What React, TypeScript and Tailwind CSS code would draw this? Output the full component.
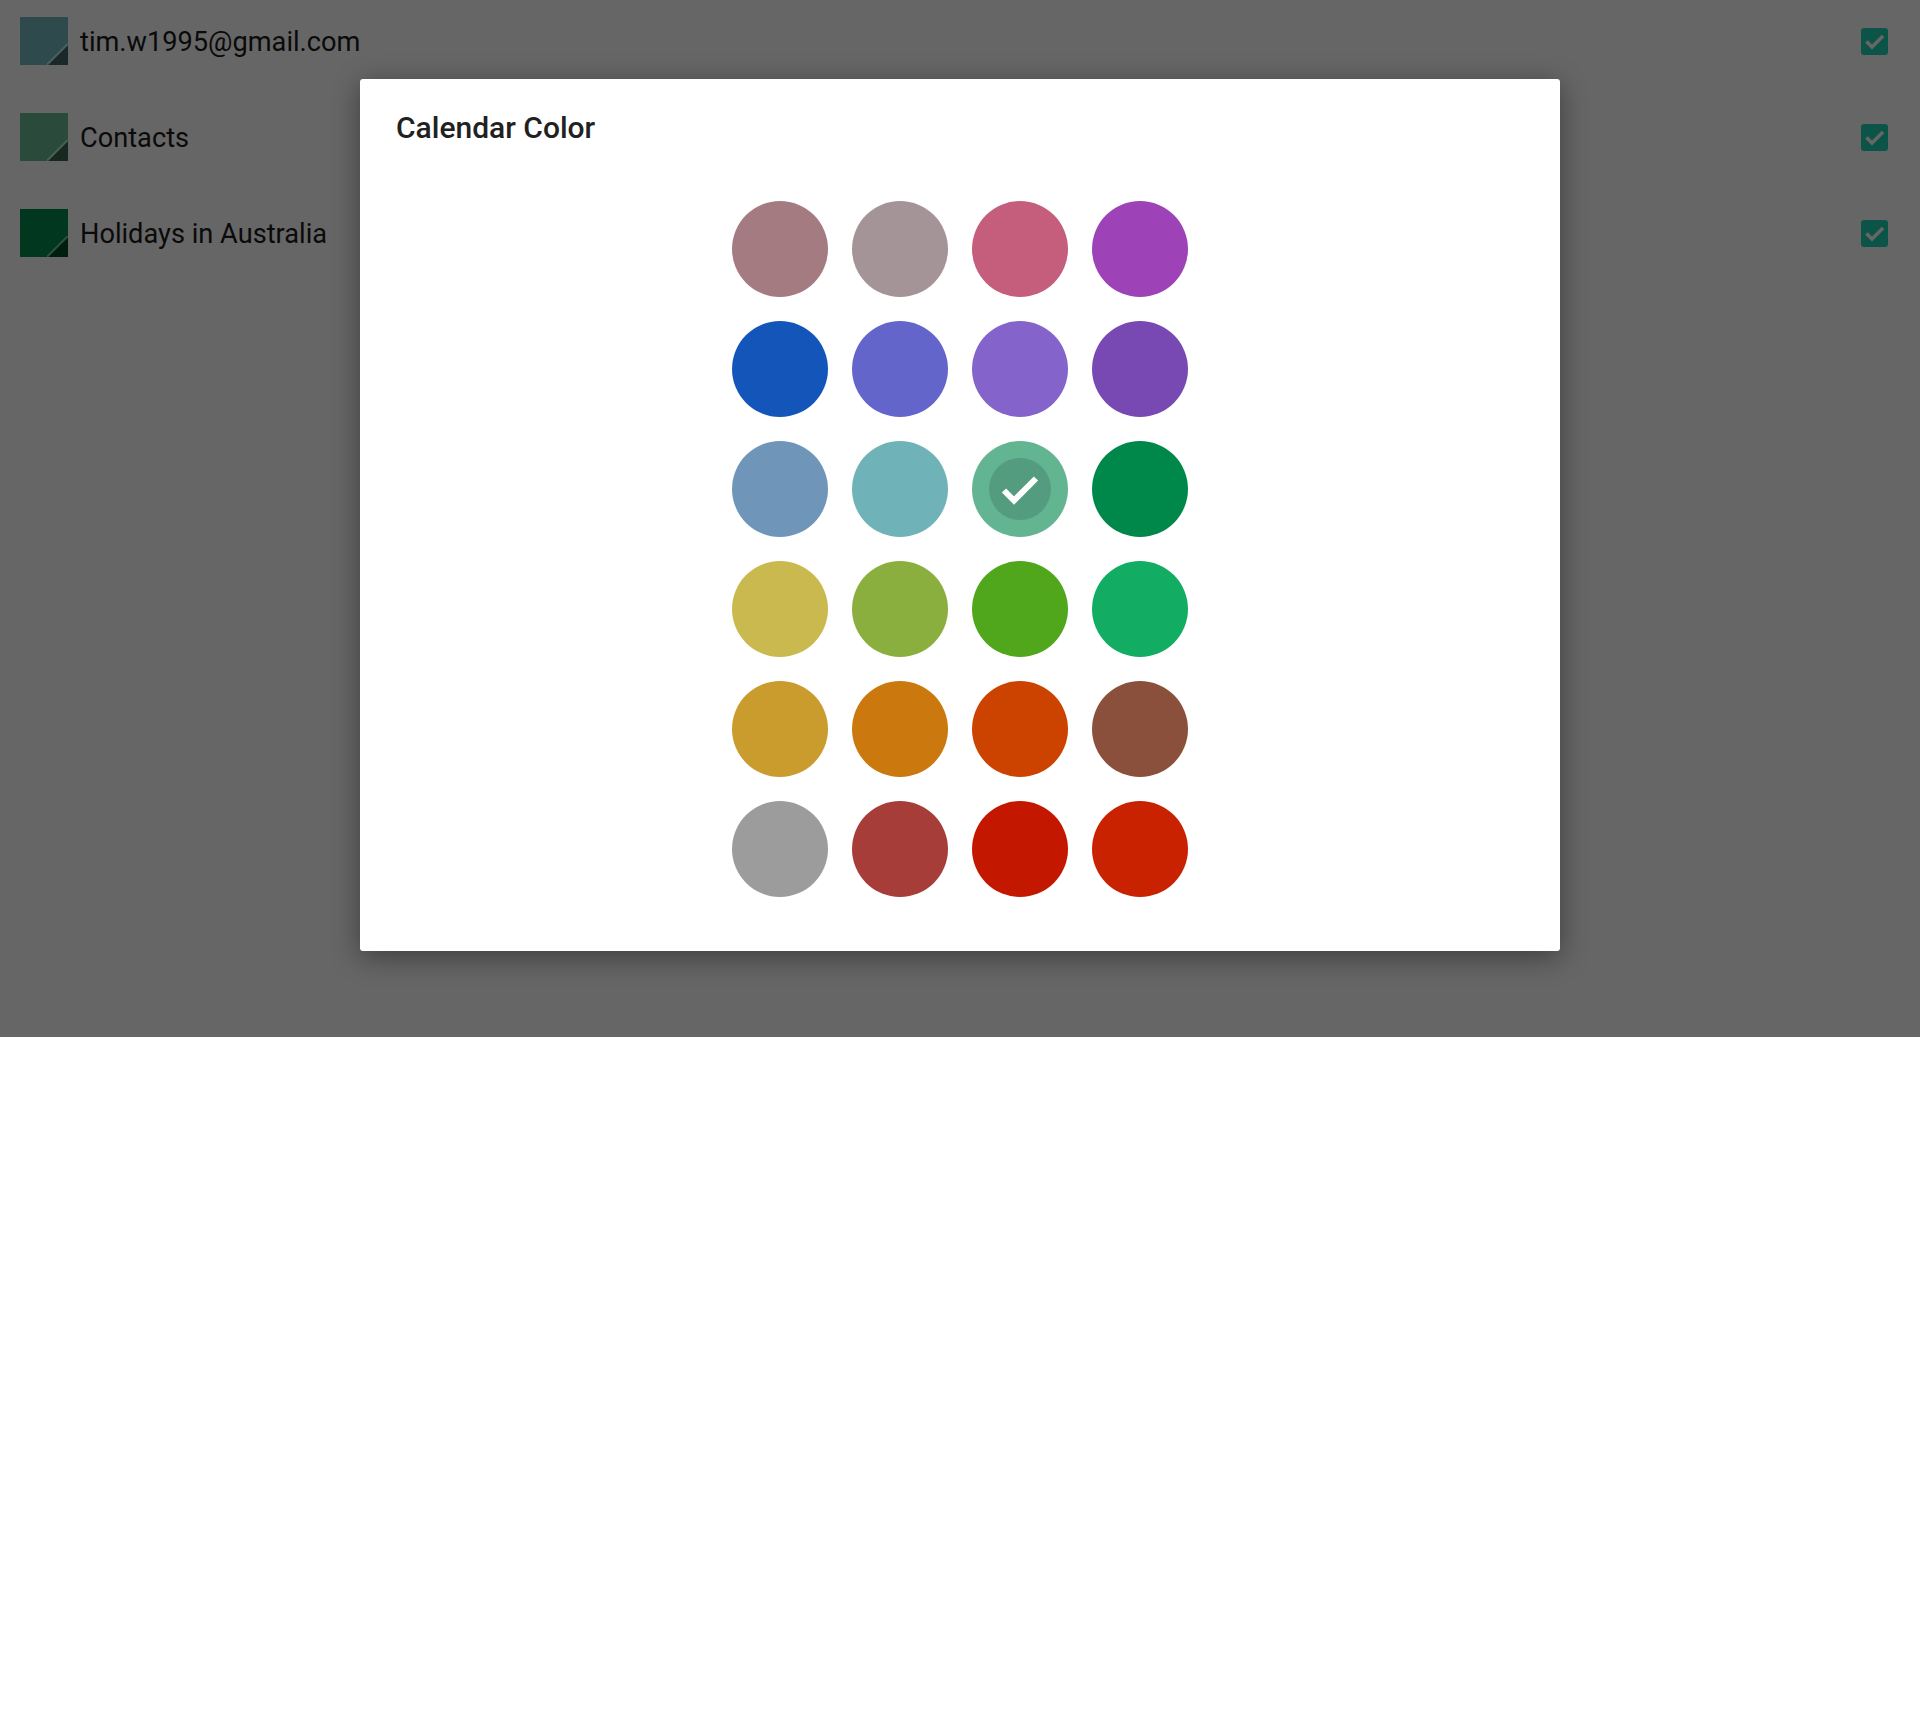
import React from "react";

const calendars = [
  { name: "tim.w1995@gmail.com", color: "bg-[#2f4a4c]" },
  { name: "Contacts", color: "bg-[#2a4a3c]" },
  { name: "Holidays in Australia", color: "bg-[#00371e]" },
];

// rows of the picker, left to right
const palette = [
  ["#a47b81", "#a59497", "#c55e7d", "#9d42b7"],
  ["#1455b9", "#6365cb", "#8464ca", "#7849b3"],
  ["#6f96b9", "#6fb3b9", "#63b592", "#00884a"],
  ["#cab94e", "#8baf3e", "#50a71b", "#12ad63"],
  ["#ca9b2d", "#cb780e", "#cc4300", "#8b503c"],
  ["#9c9c9c", "#a63d39", "#c41700", "#c82200"],
];

const SELECTED = "#63b592";

function Swatch({ color }: { color: string }) {
  return (
    <div className={`relative w-12 h-12 shrink-0 overflow-hidden ${color}`}>
      <svg className="absolute right-0 bottom-0" width="21" height="21" viewBox="0 0 21 21">
        <polygon points="21,0 21,21 0,21" fill="rgba(0,0,0,0.45)" />
        <line x1="21" y1="0" x2="0" y2="21" stroke="rgba(255,255,255,0.18)" strokeWidth="2" />
      </svg>
    </div>
  );
}

function CheckBox() {
  return (
    <div className="w-[27px] h-[27px] rounded-[3px] bg-[#0d5448]">
      <svg width="27" height="27" viewBox="0 0 27 27" fill="none">
        <polyline points="5.5,13.5 11,19 22,8" stroke="#666666" strokeWidth="3.5" />
      </svg>
    </div>
  );
}

function ColorDot({ hex }: { hex: string }) {
  const on = hex === SELECTED;
  return (
    <div
      className="w-24 h-24 rounded-full flex items-center justify-center"
      style={{ backgroundColor: hex }}
    >
      {on && (
        <div className="w-[62px] h-[62px] rounded-full bg-[#539c7f] flex items-center justify-center">
          <svg width="40" height="40" viewBox="0 0 40 40" fill="none">
            <polyline points="4,21.5 14,31.5 36,9.5" stroke="#ffffff" strokeWidth="6" />
          </svg>
        </div>
      )}
    </div>
  );
}

export default function App() {
  return (
    <div className="w-[1920px] min-h-[1733px] bg-white font-['Roboto',sans-serif]">
      <div className="relative h-[1037px] bg-[#666666]">
        <div className="flex flex-col gap-12 pt-[17px] pl-5 pr-8">
          {calendars.map((c) => (
            <div key={c.name} className="h-12 flex items-center">
              <Swatch color={c.color} />
              <span className="ml-3 pt-[2px] text-[27.2px] text-[#0a0a0a]">{c.name}</span>
              <div className="ml-auto">
                <CheckBox />
              </div>
            </div>
          ))}
        </div>

        <div className="absolute left-[360px] top-[79px] w-[1200px] h-[872px] bg-white rounded-[3px] shadow-[0_6px_28px_rgba(0,0,0,0.4)]">
          <h2 className="pl-9 pt-[31px] text-[30px] leading-[36px] font-medium text-[#212121]">
            Calendar Color
          </h2>
          <div className="mt-[55px] grid grid-cols-[repeat(4,96px)] gap-6 justify-center">
            {palette.flat().map((hex) => (
              <ColorDot key={hex} hex={hex} />
            ))}
          </div>
        </div>
      </div>
    </div>
  );
}
